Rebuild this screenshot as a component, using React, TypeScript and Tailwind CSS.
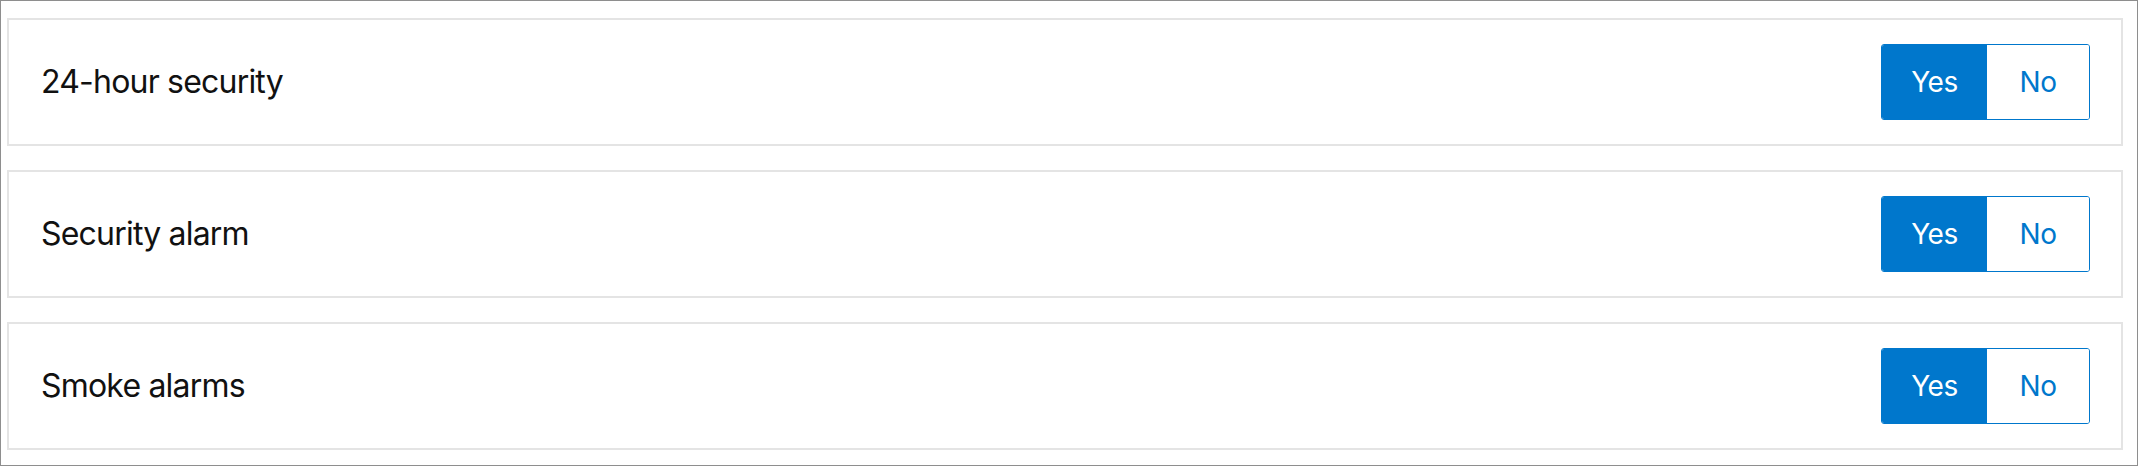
import React, { useState } from "react";

interface ToggleRowProps {
    label: string;
}

const ToggleRow = (props: ToggleRowProps) => {
    const { label } = props;
    const [value, setValue] = useState(true);

    return (
        <div className="flex h-[128px] items-center justify-between border-2 border-[#e4e4e4] pl-[32px] pr-[31px]">
            <span className="text-[32px] leading-none tracking-[-0.8px] text-[#111]">{label}</span>
            <div className="flex h-[76px] overflow-hidden rounded-[3px] border border-[#0077cc] tracking-[-0.5px]">
                <button
                    onClick={() => setValue(true)}
                    className={`w-[105px] text-[28px] ${value ? "bg-[#0077cc] text-white" : "bg-white text-[#0077cc]"}`}
                >
                    Yes
                </button>
                <button
                    onClick={() => setValue(false)}
                    className={`w-[102px] text-[28px] ${!value ? "bg-[#0077cc] text-white" : "bg-white text-[#0077cc]"}`}
                >
                    No
                </button>
            </div>
        </div>
    );
};

export default function App() {
    return (
        <div
            className="flex h-[466px] w-[2138px] flex-col gap-[24px] border border-[#8e8e8e] bg-white pt-[17px] pr-[14px] pb-[14px] pl-[6px]"
            style={{ fontFamily: "Inter, 'Noto Sans', sans-serif" }}
        >
            <ToggleRow label="24-hour security" />
            <ToggleRow label="Security alarm" />
            <ToggleRow label="Smoke alarms" />
        </div>
    );
}
